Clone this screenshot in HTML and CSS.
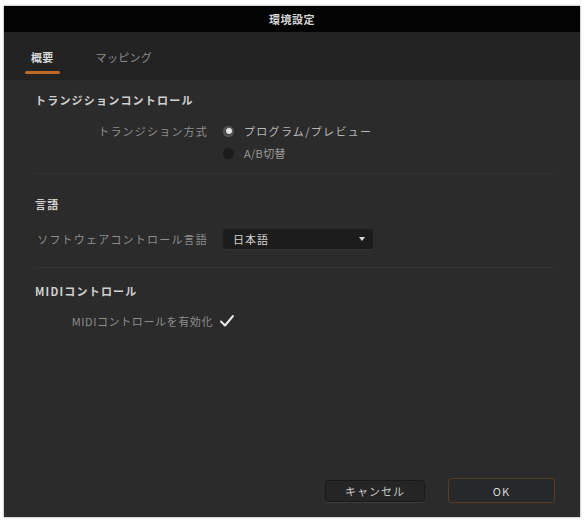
FILE: index.html
```html
<!DOCTYPE html>
<html lang="ja">
<head>
  <meta charset="UTF-8">
  <title>環境設定</title>
  <link rel="stylesheet" href="styles.css">
</head>
<body>

  <div class="dialog">
    <div class="titlebar">環境設定</div>

    <div class="tabs">
      <div class="tab active">概要</div>
      <div class="tab">マッピング</div>
    </div>

    <div class="content">
      <!-- トランジション -->
      <div class="section first">
        <div class="heading">トランジションコントロール</div>
        <div class="row row-top">
          <div class="label">トランジション方式</div>
          <div class="option"><span class="radio on"></span><span class="value">プログラム/プレビュー</span></div>
        </div>
        <div class="row">
          <div class="label"></div>
          <div class="option"><span class="radio"></span><span class="value dim">A/B切替</span></div>
        </div>
      </div>

      <!-- 言語 -->
      <div class="section second">
        <div class="heading">言語</div>
        <div class="row row-select">
          <div class="label">ソフトウェアコントロール言語</div>
          <div class="select">
            <span>日本語</span>
            <span class="arrow"></span>
          </div>
        </div>
      </div>

      <!-- MIDI -->
      <div class="section third">
        <div class="heading">MIDIコントロール</div>
        <div class="row row-midi">
          <div class="label short">MIDIコントロールを有効化</div>
          <div class="option">
            <svg class="check" width="16" height="14" viewBox="0 0 16 14">
              <path d="M2 7.5 L6 11.5 L14 2" fill="none" stroke="#e8e8e8" stroke-width="2" stroke-linecap="round" stroke-linejoin="round"/>
            </svg>
          </div>
        </div>
      </div>
    </div>

    <div class="footer">
      <button class="btn cancel">キャンセル</button>
      <button class="btn ok">OK</button>
    </div>
  </div>

</body>
</html>
```

FILE: styles.css
```css
* {
  box-sizing: border-box;
}

body {
  margin: 0;
  background-color: #fff;
  font-family: "Noto Sans CJK JP", "Noto Sans", sans-serif;
  font-size: 11px;
}

.dialog {
  width: 576px;
  height: 511px;
  margin: 6px 4px;
  background-color: #2b2b2b;
  display: flex;
  flex-direction: column;
  box-shadow: 0 0 2px rgba(0,0,0,0.5);
}

.titlebar {
  height: 26px;
  background-color: #030303;
  color: #d6d6d6;
  font-weight: bold;
  text-align: center;
  line-height: 26px;
  letter-spacing: 0.5px;
}

.tabs {
  height: 48px;
  background-color: #232323;
  display: flex;
  gap: 32px;
  padding-left: 22px;
}

.tab {
  height: 48px;
  line-height: 50px;
  padding: 0 5px;
  color: #8d8d8d;
  letter-spacing: 0.3px;
}

.tab.active {
  color: #d8d8d8;
  font-weight: bold;
  position: relative;
}

.tab.active::after {
  content: "";
  position: absolute;
  left: -1px;
  right: -1px;
  top: 39px;
  height: 3px;
  border-radius: 2px;
  background-color: #c06a2a;
}

.content {
  padding: 0 25px 0 31px;
}

.section {
  border-bottom: 1px solid #333333;
}

.section.first {
  padding-top: 13px;
  padding-bottom: 9px;
}

.section.second {
  padding-top: 23px;
  padding-bottom: 18px;
}

.section.third {
  padding-top: 16px;
  border-bottom: none;
}

.heading {
  height: 14px;
  line-height: 14px;
  color: #d0d0d0;
  font-weight: bold;
  letter-spacing: 1.2px;
}

.row {
  display: grid;
  grid-template-columns: 173px 1fr;
  column-gap: 12px;
  align-items: center;
  height: 22px;
}

.row-top {
  margin-top: 13px;
}

.row-select {
  margin-top: 18px;
  height: 20px;
}

.row-midi {
  margin-top: 12px;
  grid-template-columns: 178px 1fr;
  column-gap: 6px;
}

.label {
  text-align: right;
  color: #8e8e8e;
  letter-spacing: 1.2px;
}

.label.short {
  letter-spacing: 0.6px;
}

.option {
  display: flex;
  align-items: center;
  gap: 10px;
}

.radio {
  width: 11px;
  height: 11px;
  margin-left: 3px;
  border-radius: 50%;
  background-color: #1c1c1c;
}

.radio.on {
  background-color: #3a3a3a;
  box-shadow: inset 0 0 0 2px #555;
  position: relative;
}

.radio.on::after {
  content: "";
  position: absolute;
  left: 2.5px;
  top: 2.5px;
  width: 6px;
  height: 6px;
  border-radius: 50%;
  background-color: #e4e4e4;
}

.value {
  color: #b8b8b8;
  letter-spacing: 1.3px;
}

.value.dim {
  color: #9a9a9a;
  letter-spacing: 0.3px;
}

.select {
  width: 150px;
  height: 20px;
  margin-left: 3px;
  padding: 0 8px 0 10px;
  background-color: #1c1c1c;
  border-radius: 3px;
  box-shadow: 0 1px 0 #333;
  display: flex;
  align-items: center;
  justify-content: space-between;
  color: #d0d0d0;
  letter-spacing: 1px;
}

.arrow {
  width: 0;
  height: 0;
  border-left: 3px solid transparent;
  border-right: 3px solid transparent;
  border-top: 4px solid #dadada;
}

.footer {
  margin-top: auto;
  padding: 0 25px 14px 0;
  display: flex;
  justify-content: flex-end;
  align-items: center;
  gap: 23px;
}

.btn {
  font-family: "Noto Sans CJK JP", "Noto Sans", sans-serif;
  font-size: 11px;
  cursor: pointer;
  border-radius: 3px;
  letter-spacing: 1px;
}

.cancel {
  width: 100px;
  height: 22px;
  background-color: #252525;
  border: 1px solid #1a1a1a;
  box-shadow: 0 1px 0 #3a3a3a;
  color: #c8c8c8;
}

.ok {
  width: 107px;
  height: 25px;
  background-color: #26282a;
  border: 1px solid #5a3c22;
  color: #d6d6d6;
}
```
